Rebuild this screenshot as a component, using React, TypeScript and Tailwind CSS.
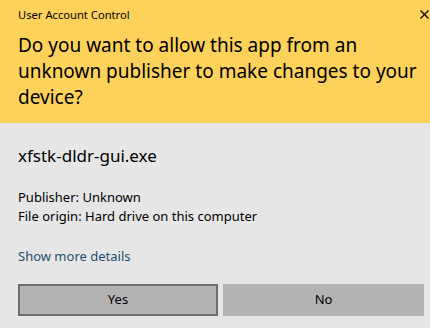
import React from "react";

export default function App() {
  return (
    <div
      className="w-[430px] h-[328px] overflow-hidden bg-[#e6e6e6] text-black flex flex-col"
      style={{ fontFamily: '"Noto Sans", "Open Sans", sans-serif' }}
    >
      <div className="bg-[#fcd25b] h-[123px] shrink-0 pl-[18px] pr-[1px] pt-[7px] flex flex-col">
        <div className="flex items-start justify-between">
          <span className="text-[11.2px] leading-[16px]">User Account Control</span>
          <svg width="9" height="9" viewBox="0 0 9 9" className="mt-[3px]">
            <path d="M0.5 0.5 L8.5 8.5 M8.5 0.5 L0.5 8.5" stroke="#000" strokeWidth="1.1" fill="none" />
          </svg>
        </div>
        <div className="mt-[9px] w-[400px] text-[19px] leading-[26px]">
          Do you want to allow this app from an unknown publisher to make changes to your device?
        </div>
      </div>
      <div className="pl-[18px] pr-[6px] flex flex-col">
        <div className="mt-[22px] text-[17px] leading-[22px]">xfstk-dldr-gui.exe</div>
        <div className="mt-[21px] text-[13px] leading-[19px]">
          <div>Publisher: Unknown</div>
          <div>File origin: Hard drive on this computer</div>
        </div>
        <div className="mt-[21px] text-[13px] leading-[18px] text-[#1f4e6e]">Show more details</div>
        <div className="mt-[19px] flex gap-[5px]">
          <button className="w-[200px] h-[32px] bg-[#b3b3b3] border-2 border-[#6e6e6e] text-[13px]">Yes</button>
          <button className="flex-1 h-[32px] bg-[#b3b3b3] text-[13px]">No</button>
        </div>
      </div>
    </div>
  );
}
